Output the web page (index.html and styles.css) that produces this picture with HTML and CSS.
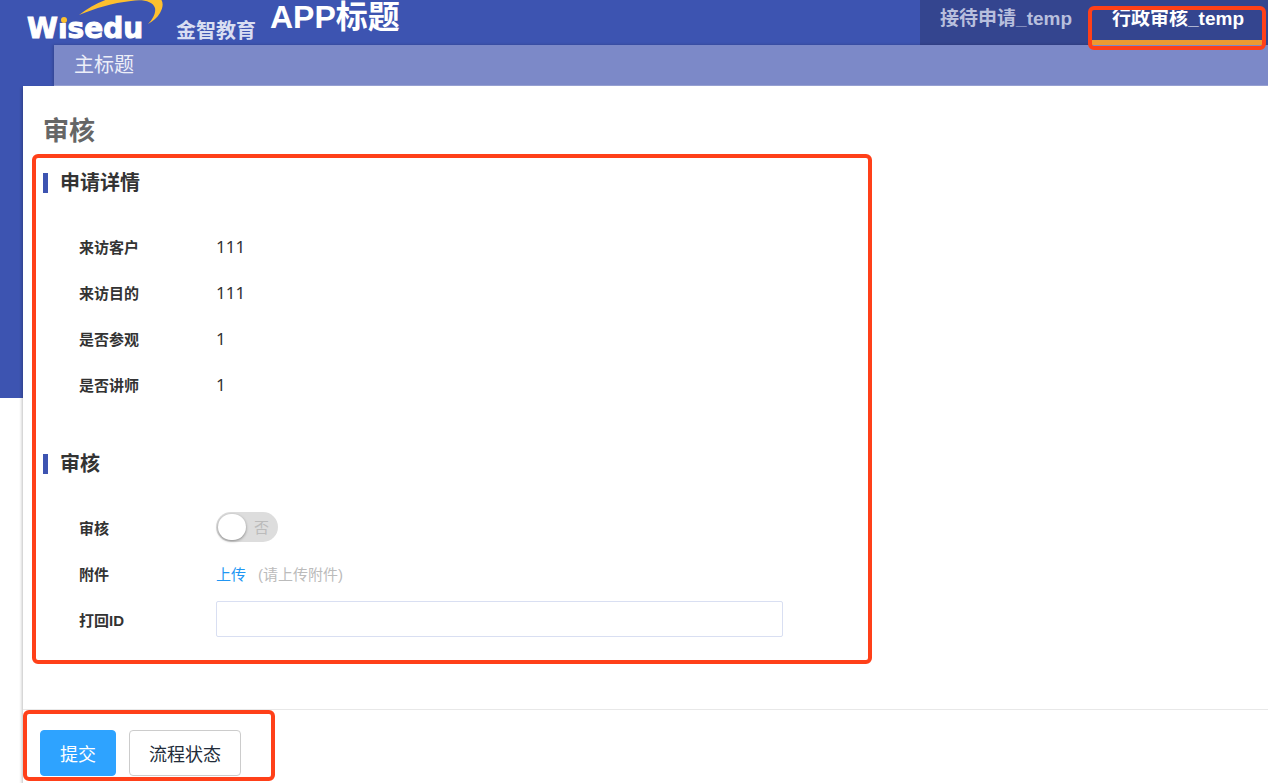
FILE: index.html
```html
<!DOCTYPE html>
<html lang="zh-CN">
<head>
<meta charset="utf-8">
<title>APP标题</title>
<link rel="stylesheet" href="styles.css">
</head>
<body>
<header class="header">
  <svg class="logo" width="270" height="45" viewBox="0 0 270 45" role="img" aria-label="Wisedu 金智教育">
    <path class="logo-swoosh" d="M79 15C88 8 97 3 108-1L120-6H150L160-2C164 2 163 8 160 13C157 18 153 21 148 24C153 19 156 13 155 8C153 1 142-1 131 1C112 3 96 8 79 15Z"/>
    <text class="logo-latin" x="27" y="38">Wisedu</text>
    <rect class="logo-mask" x="59" y="14" width="11" height="9"/>
    <circle class="logo-dot" cx="64" cy="20" r="3"/>
    <text class="logo-cjk" x="176" y="38">金智教育</text>
  </svg>
  <h1 class="app-title">APP标题</h1>
  <nav class="tabs">
    <a class="tab" href="#apply">接待申请_temp</a>
    <a class="tab tab-active" href="#review">行政审核_temp</a>
  </nav>
</header>
<div class="subheader">主标题</div>
<main class="panel">
  <h2 class="page-title">审核</h2>
  <form class="form" id="review">
    <div class="outlined details">
      <section class="section">
        <h3 class="section-title">申请详情</h3>
        <dl class="rows">
          <div class="row"><dt class="label">来访客户</dt><dd class="value">111</dd></div>
          <div class="row"><dt class="label">来访目的</dt><dd class="value">111</dd></div>
          <div class="row"><dt class="label">是否参观</dt><dd class="value">1</dd></div>
          <div class="row"><dt class="label">是否讲师</dt><dd class="value">1</dd></div>
        </dl>
      </section>
      <section class="section">
        <h3 class="section-title">审核</h3>
        <div class="rows">
          <div class="row">
            <label class="label" for="approve">审核</label>
            <span class="switch"><input class="switch-input" type="checkbox" role="switch" id="approve"><span class="switch-text">否</span></span>
          </div>
          <div class="row">
            <span class="label">附件</span>
            <span class="upload"><a class="upload-link" href="#upload">上传</a><span class="hint">(请上传附件)</span></span>
          </div>
          <div class="row">
            <label class="label" for="return-id">打回ID</label>
            <input class="text-input" type="text" id="return-id">
          </div>
        </div>
      </section>
    </div>
    <footer class="footer">
      <div class="outlined actions">
        <button class="button button-primary" type="submit">提交</button>
        <button class="button" type="button">流程状态</button>
      </div>
    </footer>
  </form>
</main>
</body>
</html>
```
FILE: styles.css
```css
* { box-sizing: border-box; }

body {
  display: flex;
  flex-direction: column;
  min-height: 100vh;
  margin: 0;
  background: #fff linear-gradient(#3d54b1, #3d54b1) 0 0 / 100% 398px no-repeat;
  color: #333;
  font-family: "Liberation Sans", "Noto Sans CJK SC", sans-serif;
  font-size: 15px;
}

h1, h2, h3, dl, dd { margin: 0; }

.header {
  display: flex;
  height: 45px;
}

.logo { flex: none; }
.logo-swoosh, .logo-dot { fill: #fdc02f; }
.logo-mask { fill: #3d54b1; }
.logo-latin {
  fill: #fff;
  stroke: #fff;
  stroke-width: 1;
  font: bold 28px "DejaVu Sans", sans-serif;
}
.logo-cjk {
  fill: #d9def2;
  font: bold 20px "Noto Sans CJK SC", sans-serif;
}

.app-title {
  color: #fff;
  font-size: 32px;
  line-height: 34px;
  white-space: nowrap;
}

.tabs {
  display: flex;
  margin-left: auto;
  padding-right: 4px;
  background: #34458f;
}

.tab {
  position: relative;
  padding: 4px 20px 0;
  color: #b8bfdd;
  font-size: 19px;
  font-weight: bold;
  line-height: 30px;
  text-decoration: none;
  white-space: nowrap;
}

.tab-active {
  border-bottom: 5px solid #ec9a32;
  color: #fff;
}

.tab-active::after {
  position: absolute;
  inset: 6px -2px -10px -4px;
  border: 4px solid #ff4019;
  border-radius: 6px;
  content: "";
}

.subheader {
  margin-left: 54px;
  padding-left: 20px;
  border-bottom: 1px solid #98a2d4;
  background: #7c89c8;
  box-shadow: -1px 0 3px rgba(0, 0, 0, 0.2);
  color: #eceef8;
  font-size: 20px;
  line-height: 40px;
}

.panel {
  flex: 1;
  margin-left: 23px;
  padding-top: 28px;
  background: #fff;
  box-shadow: -1px 2px 3px rgba(0, 0, 0, 0.25);
}

.page-title {
  margin-left: 20px;
  color: #666;
  font-size: 26px;
  line-height: 34px;
}

.outlined {
  border: 4px solid #ff4019;
  border-radius: 6px;
}

.details {
  display: flex;
  flex-direction: column;
  gap: 47px;
  max-width: 840px;
  margin: 6px 9px 45px;
  padding: 15px 7px 18px;
}

.section-title {
  padding-left: 12px;
  border-left: 5px solid #3d54b1;
  font-size: 20px;
  line-height: 20px;
}

.rows { margin-top: 30px; }

.row {
  display: grid;
  grid-template-columns: 137px minmax(0, 567px);
  align-items: center;
  height: 46px;
  padding-left: 36px;
}

.label { font-weight: bold; }

.value {
  font-family: "Noto Sans", sans-serif;
  font-size: 17px;
}

.switch {
  display: flex;
  position: relative;
  width: 62px;
}

.switch-input {
  width: 62px;
  height: 30px;
  margin: 0;
  border-radius: 15px;
  appearance: none;
  background: #ddd;
}

.switch-input::before {
  display: block;
  width: 28px;
  height: 26px;
  margin: 2px;
  border-radius: 14px;
  background: #fff;
  box-shadow: 0 1px 3px rgba(0, 0, 0, 0.4);
  content: "";
}

.switch-text {
  position: absolute;
  top: 0;
  right: 9px;
  color: #bbb;
  line-height: 32px;
  pointer-events: none;
}

.upload {
  display: flex;
  gap: 12px;
}

.upload-link {
  color: #2196f3;
  text-decoration: none;
}

.hint { color: #bbb; }

.text-input {
  width: 100%;
  height: 36px;
  padding: 0 10px;
  border: 1px solid #d9dff2;
  border-radius: 2px;
  background: #fff;
  font: inherit;
}

.footer {
  border-top: 1px solid #e8e8e8;
}

.actions {
  display: flex;
  gap: 13px;
  width: fit-content;
  padding: 16px 30px 1px 13px;
}

.button {
  height: 46px;
  padding: 0 19px;
  border: 1px solid #ccc;
  border-radius: 4px;
  background: #fff;
  color: #222c3a;
  font: inherit;
  font-size: 18px;
}

.button-primary {
  border-color: #2ea3ff;
  background: #2ea3ff;
  color: #fff;
}
```
